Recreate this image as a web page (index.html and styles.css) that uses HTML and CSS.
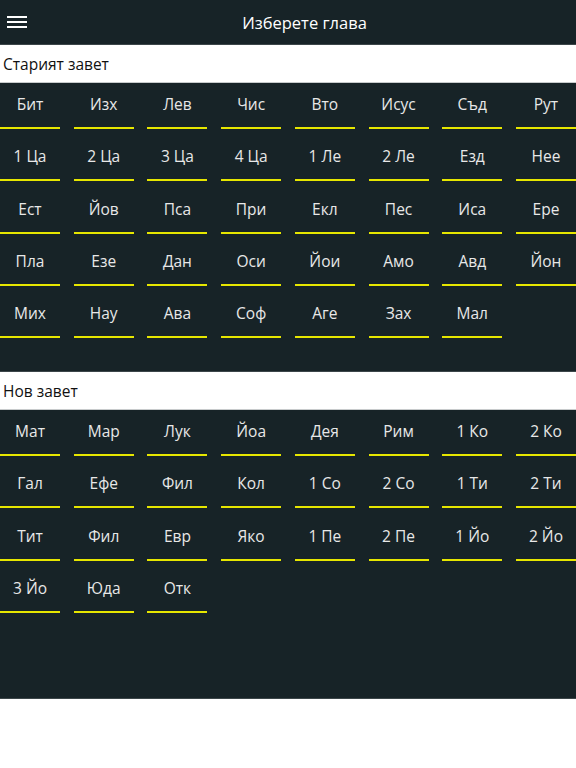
FILE: index.html
```html
<!DOCTYPE html>
<html lang="bg">
<head>
  <meta charset="UTF-8">
  <meta name="viewport" content="width=device-width, initial-scale=1.0">
  <title>Изберете глава</title>
  <link rel="stylesheet" href="styles.css">
</head>
<body>

  <!-- Горна лента -->
  <header class="topbar">
    <button class="menu-btn" aria-label="Меню">
      <svg viewBox="0 0 20 12" width="20" height="12">
        <rect x="0" y="0" width="20" height="2" fill="#fff"/>
        <rect x="0" y="5" width="20" height="2" fill="#fff"/>
        <rect x="0" y="10" width="20" height="2" fill="#fff"/>
      </svg>
    </button>
    <h1 class="title">Изберете глава</h1>
  </header>

  <!-- Старият завет -->
  <h2 class="section-title">Старият завет</h2>
  <div class="books">
    <a class="book">Бит</a>
    <a class="book">Изх</a>
    <a class="book">Лев</a>
    <a class="book">Чис</a>
    <a class="book">Вто</a>
    <a class="book">Исус</a>
    <a class="book">Съд</a>
    <a class="book">Рут</a>
    <a class="book">1 Ца</a>
    <a class="book">2 Ца</a>
    <a class="book">3 Ца</a>
    <a class="book">4 Ца</a>
    <a class="book">1 Ле</a>
    <a class="book">2 Ле</a>
    <a class="book">Езд</a>
    <a class="book">Нее</a>
    <a class="book">Ест</a>
    <a class="book">Йов</a>
    <a class="book">Пса</a>
    <a class="book">При</a>
    <a class="book">Екл</a>
    <a class="book">Пес</a>
    <a class="book">Иса</a>
    <a class="book">Ере</a>
    <a class="book">Пла</a>
    <a class="book">Езе</a>
    <a class="book">Дан</a>
    <a class="book">Оси</a>
    <a class="book">Йои</a>
    <a class="book">Амо</a>
    <a class="book">Авд</a>
    <a class="book">Йон</a>
    <a class="book">Мих</a>
    <a class="book">Нау</a>
    <a class="book">Ава</a>
    <a class="book">Соф</a>
    <a class="book">Аге</a>
    <a class="book">Зах</a>
    <a class="book">Мал</a>
  </div>

  <!-- Нов завет -->
  <h2 class="section-title">Нов завет</h2>
  <div class="books">
    <a class="book">Мат</a>
    <a class="book">Мар</a>
    <a class="book">Лук</a>
    <a class="book">Йоа</a>
    <a class="book">Дея</a>
    <a class="book">Рим</a>
    <a class="book">1 Ко</a>
    <a class="book">2 Ко</a>
    <a class="book">Гал</a>
    <a class="book">Ефе</a>
    <a class="book">Фил</a>
    <a class="book">Кол</a>
    <a class="book">1 Со</a>
    <a class="book">2 Со</a>
    <a class="book">1 Ти</a>
    <a class="book">2 Ти</a>
    <a class="book">Тит</a>
    <a class="book">Фил</a>
    <a class="book">Евр</a>
    <a class="book">Яко</a>
    <a class="book">1 Пе</a>
    <a class="book">2 Пе</a>
    <a class="book">1 Йо</a>
    <a class="book">2 Йо</a>
    <a class="book">3 Йо</a>
    <a class="book">Юда</a>
    <a class="book">Отк</a>
  </div>

</body>
</html>
```

FILE: styles.css
```css
body {
  margin: 0;
  padding: 0;
  background-color: #fff;
  font-family: "Open Sans", "Noto Sans", sans-serif;
}

/* Горна лента */
.topbar {
  height: 44px;
  display: flex;
  align-items: center;
  background-color: #172327;
  border-bottom: 1px solid #3c4649;
}

.menu-btn {
  background: none;
  border: none;
  padding: 0 0 0 7px;
  margin-top: 0;
  display: flex;
  cursor: pointer;
}

.title {
  flex: 1;
  margin: 0;
  padding-left: 6px;
  text-align: center;
  font-size: 16.5px;
  font-weight: normal;
  color: #fff;
}

/* Заглавие на раздела */
.section-title {
  margin: 0;
  height: 37px;
  padding-left: 3px;
  display: flex;
  align-items: center;
  font-size: 15.5px;
  font-weight: normal;
  color: #111;
  background-color: #fff;
  border-bottom: 1px solid #c8cbcc;
}

/* Мрежа с книгите */
.books {
  height: 289px;
  box-sizing: border-box;
  display: grid;
  grid-template-columns: repeat(8, 1fr);
  grid-auto-rows: 46px;
  column-gap: 13.7px;
  row-gap: 6.3px;
  align-content: start;
  background-color: #172327;
  border-bottom: 1px solid #3c4649;
}

.book {
  height: 46px;
  box-sizing: border-box;
  padding-top: 10px;
  text-align: center;
  font-size: 15.5px;
  line-height: 22px;
  color: #e8e8e8;
  border-bottom: 2px solid #e6e600;
  cursor: pointer;
}
```
